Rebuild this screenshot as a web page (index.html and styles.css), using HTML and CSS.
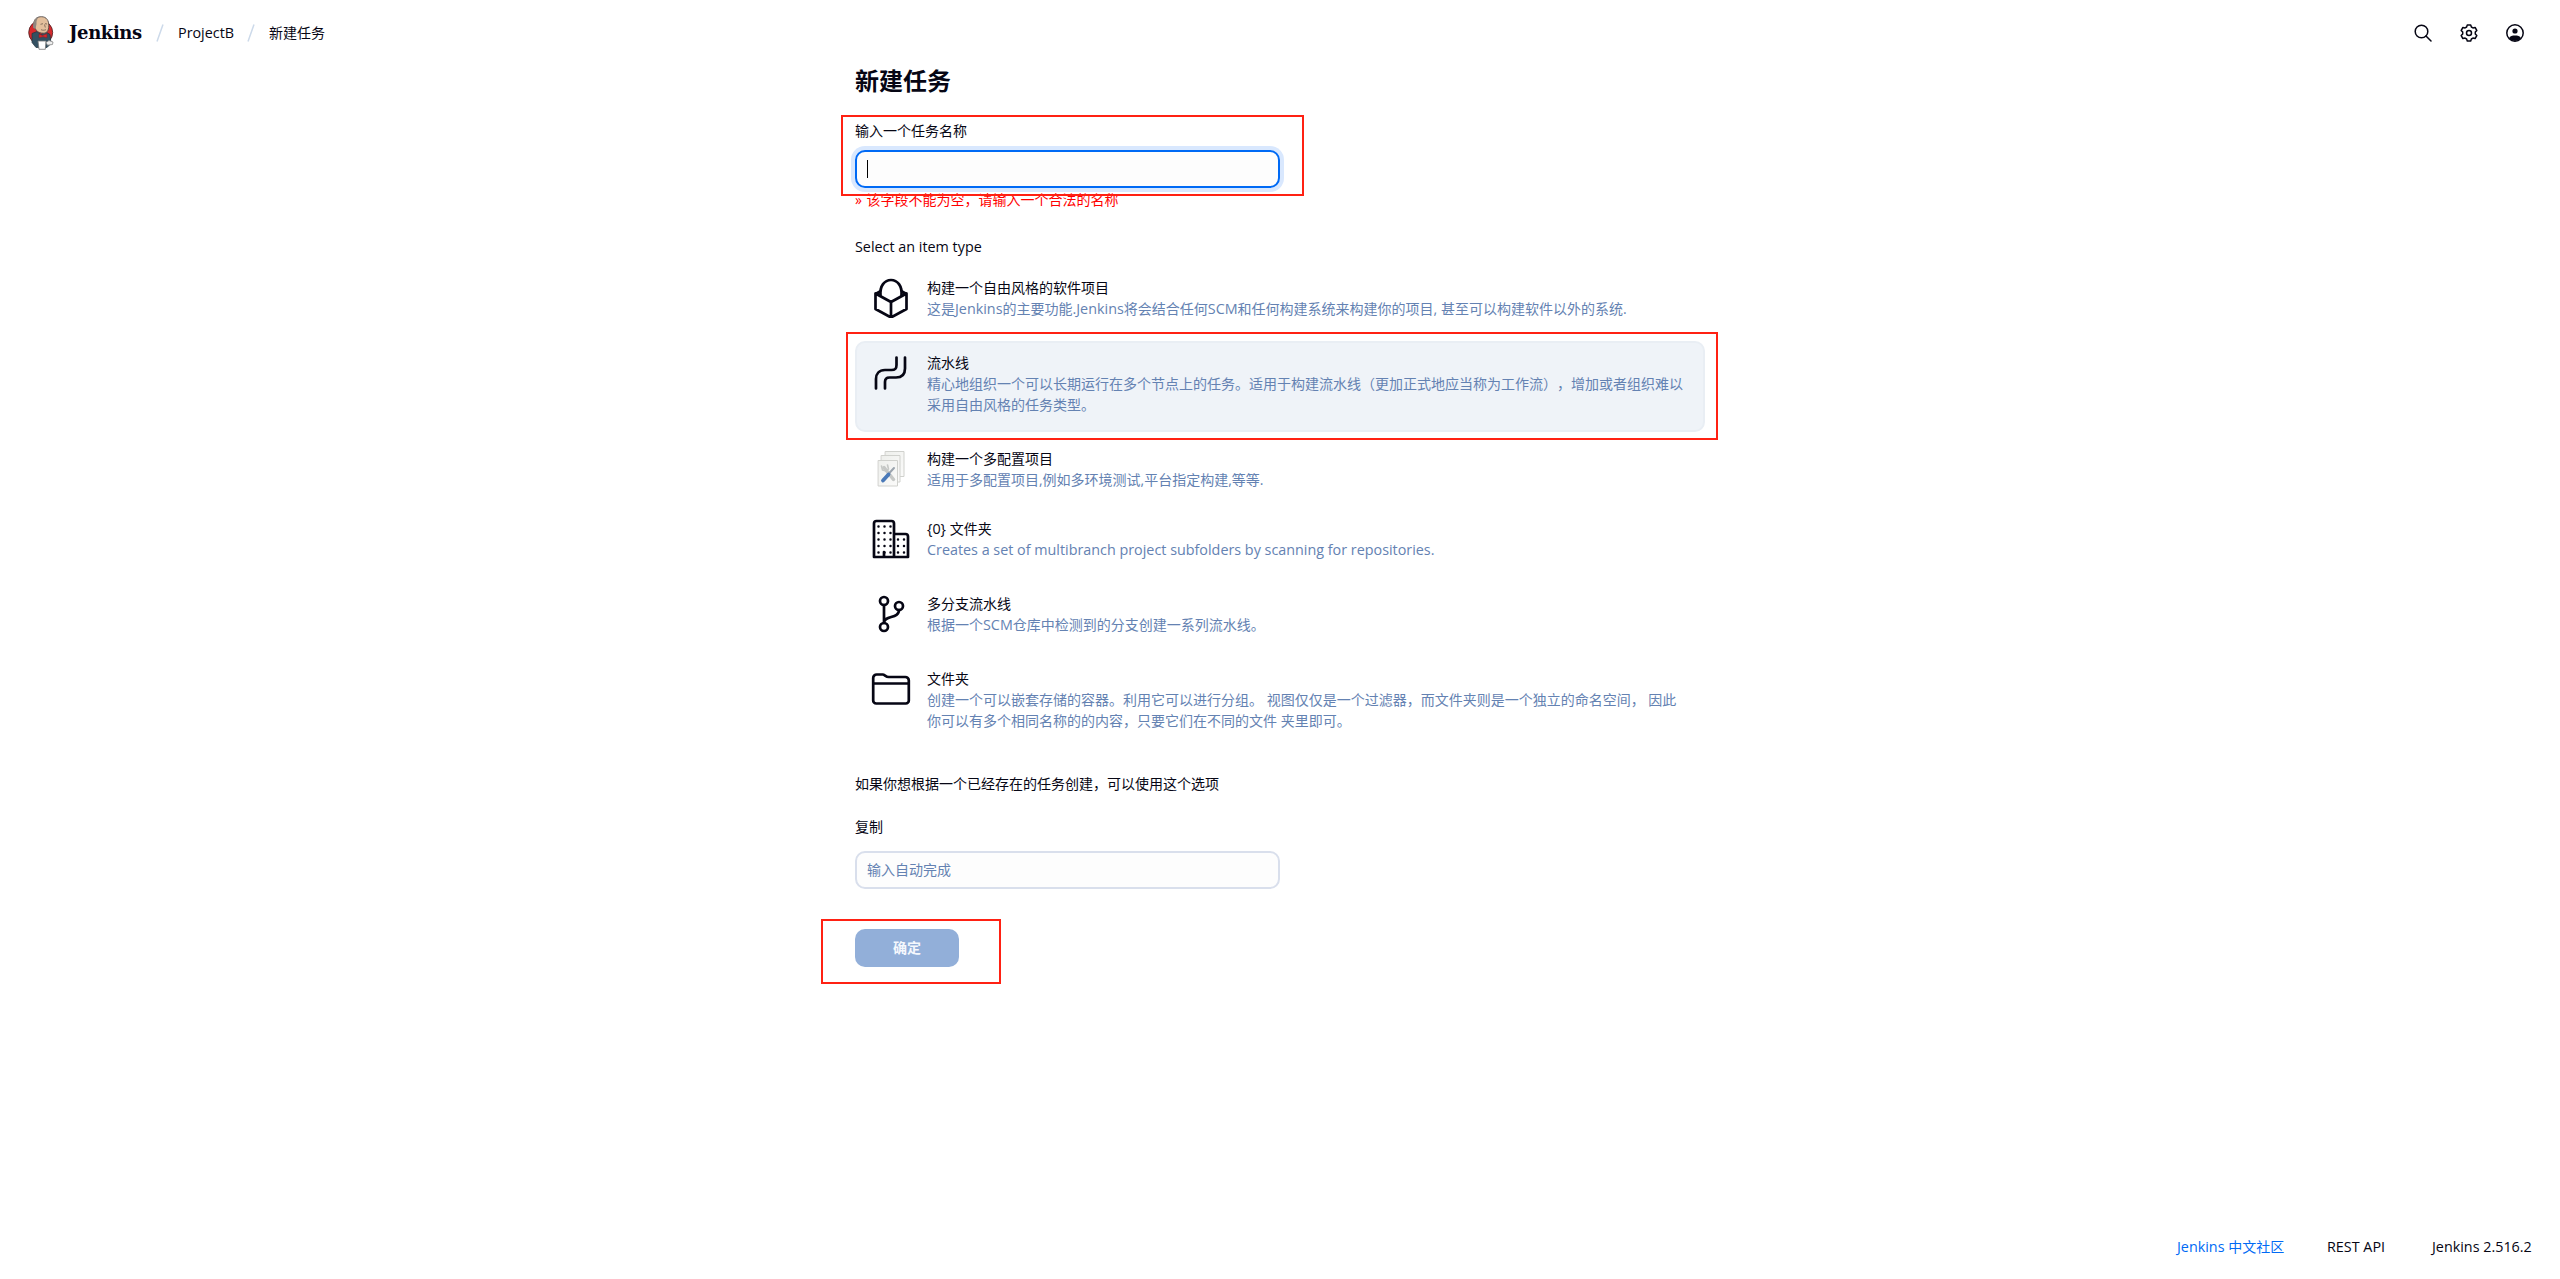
FILE: index.html
```html
<!DOCTYPE html>
<html lang="zh-CN">
<head>
<meta charset="utf-8">
<title>新建任务 - Jenkins</title>
<link rel="stylesheet" href="styles.css">
</head>
<body>
<header class="header">
  <svg class="logo" viewBox="0 0 26 34">
    <circle cx="12.7" cy="16.5" r="12" fill="#d6292c" stroke="#4a2022" stroke-width=".8"/>
    <path d="M4 17.500l5-2 4 3 5-2.500 4 2.500 1 9-4 4H8l-4-5z" fill="#335061" stroke="#23323c" stroke-width=".7"/>
    <path d="M6 6C7 2 10 .7 13.500.7c5 0 7.500 4 7.300 9 0 5-2 7.500-5.500 7.500-5 0-8-3-9-7z" fill="#e3bf9c" stroke="#514a46" stroke-width=".9"/>
    <path d="M5.200 12C4.500 6 7 2 11 1c-3 3 -2.500 5-2.500 7l-1 5z" fill="#8f8780"/>
    <path d="M12.500 8.300l2.500-.6M17 7.700l2 .3M16.500 8.500l.8 3M13 13.700c2 .8 3 .6 5 0" fill="none" stroke="#6d5a4d" stroke-width=".8"/>
    <path d="M11 18l3.500 1.500L19 17.700v4l-4-1-4 1z" fill="#d6292c" stroke="#81202a" stroke-width=".6"/>
    <path d="M10 25h8l-.7 8.300h-6.300z" fill="#fff" stroke="#777" stroke-width=".8"/>
    <path d="M18 26.500l3-2 4 1.500-.5 2.500-5 .7z" fill="#eee" stroke="#888" stroke-width=".8"/>
  </svg>
  <a class="brand">Jenkins</a>
  <svg class="slash" viewBox="0 0 8 18"><path d="M7 .5L1 17.500"/></svg>
  <a class="crumb crumb-project lat">ProjectB</a>
  <svg class="slash" viewBox="0 0 8 18"><path d="M7 .5L1 17.500"/></svg>
  <a class="crumb">新建任务</a>
  <div class="actions">
    <svg class="action" viewBox="0 0 18 18"><circle cx="7.500" cy="7.500" r="6.300"/><path d="M12 12l5 5"/></svg>
    <svg class="action" viewBox="0 0 18 18"><circle cx="9" cy="9" r="2.500"/><path d="M7.300.9h3.400l.7 2.100 1.500.9 2.200-.4 1.700 2.900-1.500 1.700v1.800l1.500 1.700-1.700 2.900-2.200-.4-1.500.9-.7 2.100H7.300L6.600 15l-1.500-.9-2.200.4-1.700-2.900 1.500-1.700V8.100L1.200 6.400l1.700-2.900 2.200.4L6.600 3z"/></svg>
    <svg class="action" viewBox="0 0 18 18"><circle cx="9" cy="9" r="8.200"/><circle class="solid" cx="9" cy="7" r="2.600"/><path class="solid" d="M3 14.200c1-2.200 3.500-2.700 6-2.700s5 .5 6 2.700A8 8 0 0 1 3 14.200z"/></svg>
  </div>
</header>

<main class="main">
  <h1 class="title">新建任务</h1>
  <label class="label">输入一个任务名称</label>
  <div class="input input-focused"><span class="caret"></span></div>
  <div class="error"><span class="quote">» </span>该字段不能为空，请输入一个合法的名称</div>
  <div class="section lat">Select an item type</div>

  <ul class="items">
    <li class="item">
      <svg class="icon" viewBox="0 0 40 40"><path d="M4.500 15.500L20 24l15.500-8.500M20 24v15M9 13.500L4.500 16v15L20 39.500 35.500 31V16L31 13.500"/><path d="M9.500 17c-.8-9 4-15 10.500-15s11.300 6 10.500 15"/></svg>
      <div class="text"><div class="name">构建一个自由风格的软件项目</div><div class="desc">这是<span class="lat">Jenkins</span>的主要功能<span class="lat">.Jenkins</span>将会结合任何<span class="lat">SCM</span>和任何构建系统来构建你的项目<span class="lat">, </span>甚至可以构建软件以外的系统.</div></div>
    </li>
    <li class="item item-tall item-selected">
      <svg class="icon" viewBox="0 0 40 40"><path d="M5 35.500V26c0-5 3-9 9-9h6.500c4 0 5-1.500 5-5V4.500M14 35.500V29c0-3 1.500-4.500 4.500-4.500H25c6 0 9-3 9-9v-11"/></svg>
      <div class="text"><div class="name">流水线</div><div class="desc">精心地组织一个可以长期运行在多个节点上的任务。适用于构建流水线（更加正式地应当称为工作流），增加或者组织难以<br>采用自由风格的任务类型。</div></div>
    </li>
    <li class="item item-short">
      <svg class="icon" viewBox="0 0 40 40">
        <defs><linearGradient id="paper" x1="0" y1="0" x2="1" y2="1"><stop offset="0" stop-color="#eeefec"/><stop offset="1" stop-color="#fbfbfa"/></linearGradient></defs>
        <g fill="url(#paper)" stroke="#d0d1cd" stroke-width="1"><path d="M14.500 2.500h18.500v25H14.500z"/><path d="M10.500 6.500h18.500v26.500H10.500z"/><path d="M7.500 11.500h19v25.500h-19z"/></g>
        <path d="M13 18.500l9.500 12" fill="none" stroke="#c6c8c6" stroke-width="3.500" stroke-linecap="round"/><path d="M10.500 17l1 4 4 1 2-2-1-4" fill="none" stroke="#c6c8c6" stroke-width="1.600"/>
        <path d="M23 19l-6 6.500" fill="none" stroke="#9ba4ae" stroke-width="2"/><path d="M17.500 25.500l-5.500 6" fill="none" stroke="#4a79b8" stroke-width="3.800" stroke-linecap="round"/>
      </svg>
      <div class="text"><div class="name">构建一个多配置项目</div><div class="desc">适用于多配置项目,例如多环境测试,平台指定构建,等等.</div></div>
    </li>
    <li class="item">
      <svg class="icon" viewBox="0 0 40 40"><path d="M3 38V4.500A2.500 2.500 0 0 1 5.500 2h15A2.500 2.500 0 0 1 23 4.500V38M23 15h11.500a2.500 2.500 0 0 1 2.500 2.500V38M3 38h34M13 38v-5"/><path class="dots" d="M7.500 7.500h12.100M7.500 14h12.100M7.500 20.500h12.100M7.500 27h12.100M7.500 33.500h12.100M27 20.500h6.100M27 27h6.100M27 33.500h6.100"/></svg>
      <div class="text"><div class="name"><span class="lat">{0} </span>文件夹</div><div class="desc lat">Creates a set of multibranch project subfolders by scanning for repositories.</div></div>
    </li>
    <li class="item">
      <svg class="icon" viewBox="0 0 40 40"><circle cx="13" cy="7" r="4"/><circle cx="13" cy="33" r="4"/><circle cx="28" cy="12" r="4"/><path d="M13 11v18M28 16c0 9-15 5-15 13"/></svg>
      <div class="text"><div class="name">多分支流水线</div><div class="desc">根据一个<span class="lat">SCM</span>仓库中检测到的分支创建一系列流水线。</div></div>
    </li>
    <li class="item item-tall">
      <svg class="icon" viewBox="0 -.5 40 40"><path d="M2.200 31V8.500A3.500 3.500 0 0 1 5.700 5h6c2 0 3 2.500 6 2.500h16.500A3.500 3.500 0 0 1 37.800 11v20a3 3 0 0 1-3 3H5.200a3 3 0 0 1-3-3zM2.200 14h35.600"/></svg>
      <div class="text"><div class="name">文件夹</div><div class="desc">创建一个可以嵌套存储的容器。利用它可以进行分组。 视图仅仅是一个过滤器，而文件夹则是一个独立的命名空间， 因此<br>你可以有多个相同名称的的内容，只要它们在不同的文件 夹里即可。</div></div>
    </li>
  </ul>

  <p class="hint">如果你想根据一个已经存在的任务创建，可以使用这个选项</p>
  <label class="copy-label">复制</label>
  <div class="input"><span class="placeholder">输入自动完成</span></div>
  <button class="submit">确定</button>
</main>

<footer class="footer">
  <a class="footer-link"><span class="lat">Jenkins </span>中文社区</a>
  <a class="footer-api lat">REST API</a>
  <span class="footer-version lat">Jenkins 2.516.2</span>
</footer>

<div class="mark mark-name"></div>
<div class="mark mark-pipeline"></div>
<div class="mark mark-submit"></div>
</body>
</html>
```
FILE: styles.css
```css
* { box-sizing: border-box; }
body {
  margin: 0;
  height: 1279px;
  display: flex;
  flex-direction: column;
  background: #fff;
  color: #060614;
  font: 14px/21px "Open Sans", "Noto Sans CJK SC", sans-serif;
  text-spacing-trim: space-all;
  white-space: nowrap;
  overflow: hidden;
}
.lat { font-size: 14.35px; }
.header { height: 66px; flex: none; display: flex; align-items: center; padding: 0 36px 0 28px; }
.logo { width: 26px; height: 34px; }
.brand { width: 73px; margin-left: 15px; font: bold 18px/24px "DejaVu Serif", serif; letter-spacing: -.4px; }
.slash { width: 8px; height: 18px; margin: 0 14px; fill: none; stroke: #cddaea; stroke-width: 1.5; }
.crumb { padding-bottom: 2px; }
.crumb-project { width: 55px; }
.actions { margin-left: auto; display: flex; gap: 28px; }
.action { width: 18px; height: 18px; fill: none; stroke: #060614; stroke-width: 1.5; stroke-linecap: round; stroke-linejoin: round; }
.action .solid { fill: #060614; stroke: none; }

.main { width: 850px; margin-left: 855px; display: flex; flex-direction: column; align-items: flex-start; }
.title { margin: 0; height: 30px; font-size: 24px; line-height: 29px; font-weight: 700; }
.label { margin-top: 24px; height: 21px; }
.input { width: 425px; height: 38px; margin-top: 9px; padding: 0 10px; border: 2px solid #d9dfec; border-radius: 10px; background: #fdfdfd; display: flex; align-items: center; }
.input-focused { border-color: #006af5; box-shadow: 0 0 0 4px #d9e8fe; }
.caret { width: 1px; height: 18px; background: #000; }
.error { height: 21px; margin-top: 1px; color: #f00; }
.quote { letter-spacing: .5px; }
.section { margin-top: 26px; }

.items { width: 850px; margin: 9px 0 0; padding: 0; list-style: none; display: flex; flex-direction: column; gap: 5px; }
.item { height: 70px; padding: 9px 14px 0; display: flex; gap: 16px; border: 2px solid transparent; border-radius: 10px; }
.item-tall { height: 91px; }
.item-short { height: 65px; }
.item-selected { background: #eff3f8; border-color: #e9eef4; }
.icon { width: 40px; height: 40px; margin-top: 1px; flex: none; fill: none; stroke: #060614; stroke-width: 2.7; stroke-linecap: round; stroke-linejoin: round; }
.icon .dots { stroke-width: 2.5; stroke-dasharray: 0 6; }
.name { height: 21px; }
.desc { color: #6482b2; }

.hint { margin: 25px 0 0; }
.copy-label { margin-top: 22px; }
.copy-label + .input { margin-top: 14px; }
.placeholder { padding-bottom: 2px; color: #6482b2; }
.submit { width: 104px; height: 38px; margin-top: 40px; padding: 0 0 2px; border: 0; border-radius: 10px; background: #92afd9; color: #f5f8fd; font: 600 14px/21px "Noto Sans CJK SC", sans-serif; }

.footer { margin-top: auto; height: 43px; padding-right: 28px; display: flex; justify-content: flex-end; }
.footer-link { width: 109px; color: #006af5; }
.footer-api { width: 60px; margin-left: 41px; }
.footer-version { width: 100px; margin-left: 45px; }

.mark { position: absolute; border: 2px solid #ff2113; }
.mark-name { left: 841px; top: 115px; width: 463px; height: 81px; }
.mark-pipeline { left: 846px; top: 332px; width: 872px; height: 108px; }
.mark-submit { left: 821px; top: 919px; width: 180px; height: 65px; }
```
